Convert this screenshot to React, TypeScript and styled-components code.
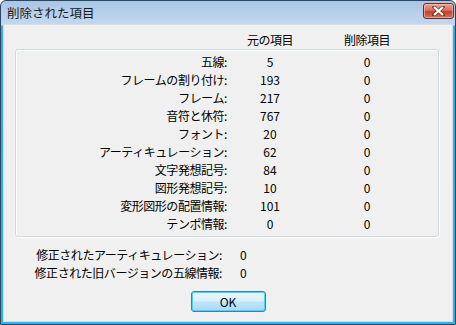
import React from "react";
import styled, { createGlobalStyle } from "styled-components";

const Global = createGlobalStyle`
  html, body { margin: 0; padding: 0; background: #ffffff; }
  body { font-family: "Noto Sans CJK JP", "Noto Sans", sans-serif; }
`;

const FONT = `"Noto Sans CJK JP", "Noto Sans", sans-serif`;

const Window = styled.div`
  width: 456px;
  height: 325px;
  box-sizing: border-box;
  border: 1px solid #2c4560;
  border-radius: 6px 6px 0 0;
  background: linear-gradient(to bottom, #a9c6e6 0px, #c4d9ef 24px, #39a8e4 25px, #2ab4ea 100%);
  display: flex;
  flex-direction: column;
  overflow: hidden;
`;

const TitleBar = styled.div`
  height: 23px;
  flex: none;
  display: flex;
  align-items: center;
  justify-content: space-between;
  padding: 0 1px 0 6px;
`;

const Title = styled.span`
  font-family: ${FONT};
  font-size: 12.5px;
  color: #1a1a1a;
  line-height: 14px;
`;

const CloseButton = styled.div`
  width: 31px;
  height: 16px;
  margin-top: -3px;
  box-sizing: border-box;
  border: 1px solid #6d2a26;
  border-radius: 3px;
  background: linear-gradient(to bottom, #e8a493 0%, #d66f5c 45%, #c4412a 55%, #d2765e 100%);
  display: flex;
  align-items: center;
  justify-content: center;
  box-shadow: inset 0 0 0 1px rgba(255, 220, 210, 0.5);
`;

const Client = styled.div`
  flex: 1;
  margin: 0 2px 2px 2px;
  background: #f0f0f0;
  box-shadow: inset 0 0 0 1px #d9dde2;
  display: flex;
  flex-direction: column;
  padding: 7px 0 0 12px;
  box-sizing: border-box;
`;

const Columns = styled.div`
  display: grid;
  grid-template-columns: 211px 86px 108px;
  font-family: ${FONT};
  font-size: 12px;
  color: #000;
`;

const HeaderRow = styled(Columns)`
  height: 18px;
  line-height: 18px;
  padding-left: 1px;
`;

const Cell = styled.div<{ $align?: "left" | "right" | "center"; $tight?: boolean }>`
  text-align: ${(p) => p.$align ?? "center"};
  letter-spacing: ${(p) => (p.$tight ? "-0.45px" : "0")};
  white-space: nowrap;
  line-height: 18px;
  height: 18px;
`;

const GroupBox = styled.div`
  width: 424px;
  height: 188px;
  box-sizing: border-box;
  border: 1px solid #d0d9df;
  border-radius: 3px;
  box-shadow: inset 1px 1px 0 #ffffff, 1px 1px 0 #ffffff;
  padding: 3px 0;
`;

const Footer = styled.div`
  margin-top: 9px;
  display: grid;
  grid-template-columns: 219px auto;
  column-gap: 18px;
  font-family: ${FONT};
  font-size: 12px;
  color: #000;
  margin-left: -12px;
`;

const ButtonBar = styled.div`
  display: flex;
  justify-content: center;
  margin-top: 9px;
  margin-left: -12px;
`;

const OkButton = styled.button`
  width: 75px;
  height: 21px;
  box-sizing: border-box;
  border: 1px solid #3c7fb1;
  border-radius: 3px;
  background: linear-gradient(to bottom, #eaf6fd 0%, #d9f0fc 48%, #bee6fd 52%, #a7d9f5 100%);
  box-shadow: inset 0 0 0 1px #48d4fb;
  font-family: ${FONT};
  font-size: 12px;
  color: #000;
  padding: 0;
  line-height: 18px;
`;

const rows: [string, string, string][] = [
  ["五線:", "5", "0"],
  ["フレームの割り付け:", "193", "0"],
  ["フレーム:", "217", "0"],
  ["音符と休符:", "767", "0"],
  ["フォント:", "20", "0"],
  ["アーティキュレーション:", "62", "0"],
  ["文字発想記号:", "84", "0"],
  ["図形発想記号:", "10", "0"],
  ["変形図形の配置情報:", "101", "0"],
  ["テンポ情報:", "0", "0"],
];

export default function App() {
  return (
    <>
      <Global />
      <Window>
        <TitleBar>
          <Title>削除された項目</Title>
          <CloseButton>
            <svg width="13" height="10" viewBox="0 0 13 10">
              <path
                d="M2 1 L11 9 M11 1 L2 9"
                stroke="#4a1410"
                strokeWidth="3.6"
                strokeLinecap="square"
                opacity="0.6"
              />
              <path d="M2 1 L11 9 M11 1 L2 9" stroke="#ffffff" strokeWidth="2.2" />
            </svg>
          </CloseButton>
        </TitleBar>
        <Client>
          <HeaderRow>
            <Cell />
            <Cell $tight>元の項目</Cell>
            <Cell $tight>削除項目</Cell>
          </HeaderRow>
          <GroupBox>
            <Columns>
              {rows.map(([l, a, b]) => (
                <React.Fragment key={l}>
                  <Cell $align="right" $tight>{l}</Cell>
                  <Cell>{a}</Cell>
                  <Cell>{b}</Cell>
                </React.Fragment>
              ))}
            </Columns>
          </GroupBox>
          <Footer>
            <Cell $align="right" $tight>修正されたアーティキュレーション:</Cell>
            <Cell $align="left">0</Cell>
            <Cell $align="right" $tight>修正された旧バージョンの五線情報:</Cell>
            <Cell $align="left">0</Cell>
          </Footer>
          <ButtonBar>
            <OkButton>OK</OkButton>
          </ButtonBar>
        </Client>
      </Window>
    </>
  );
}
